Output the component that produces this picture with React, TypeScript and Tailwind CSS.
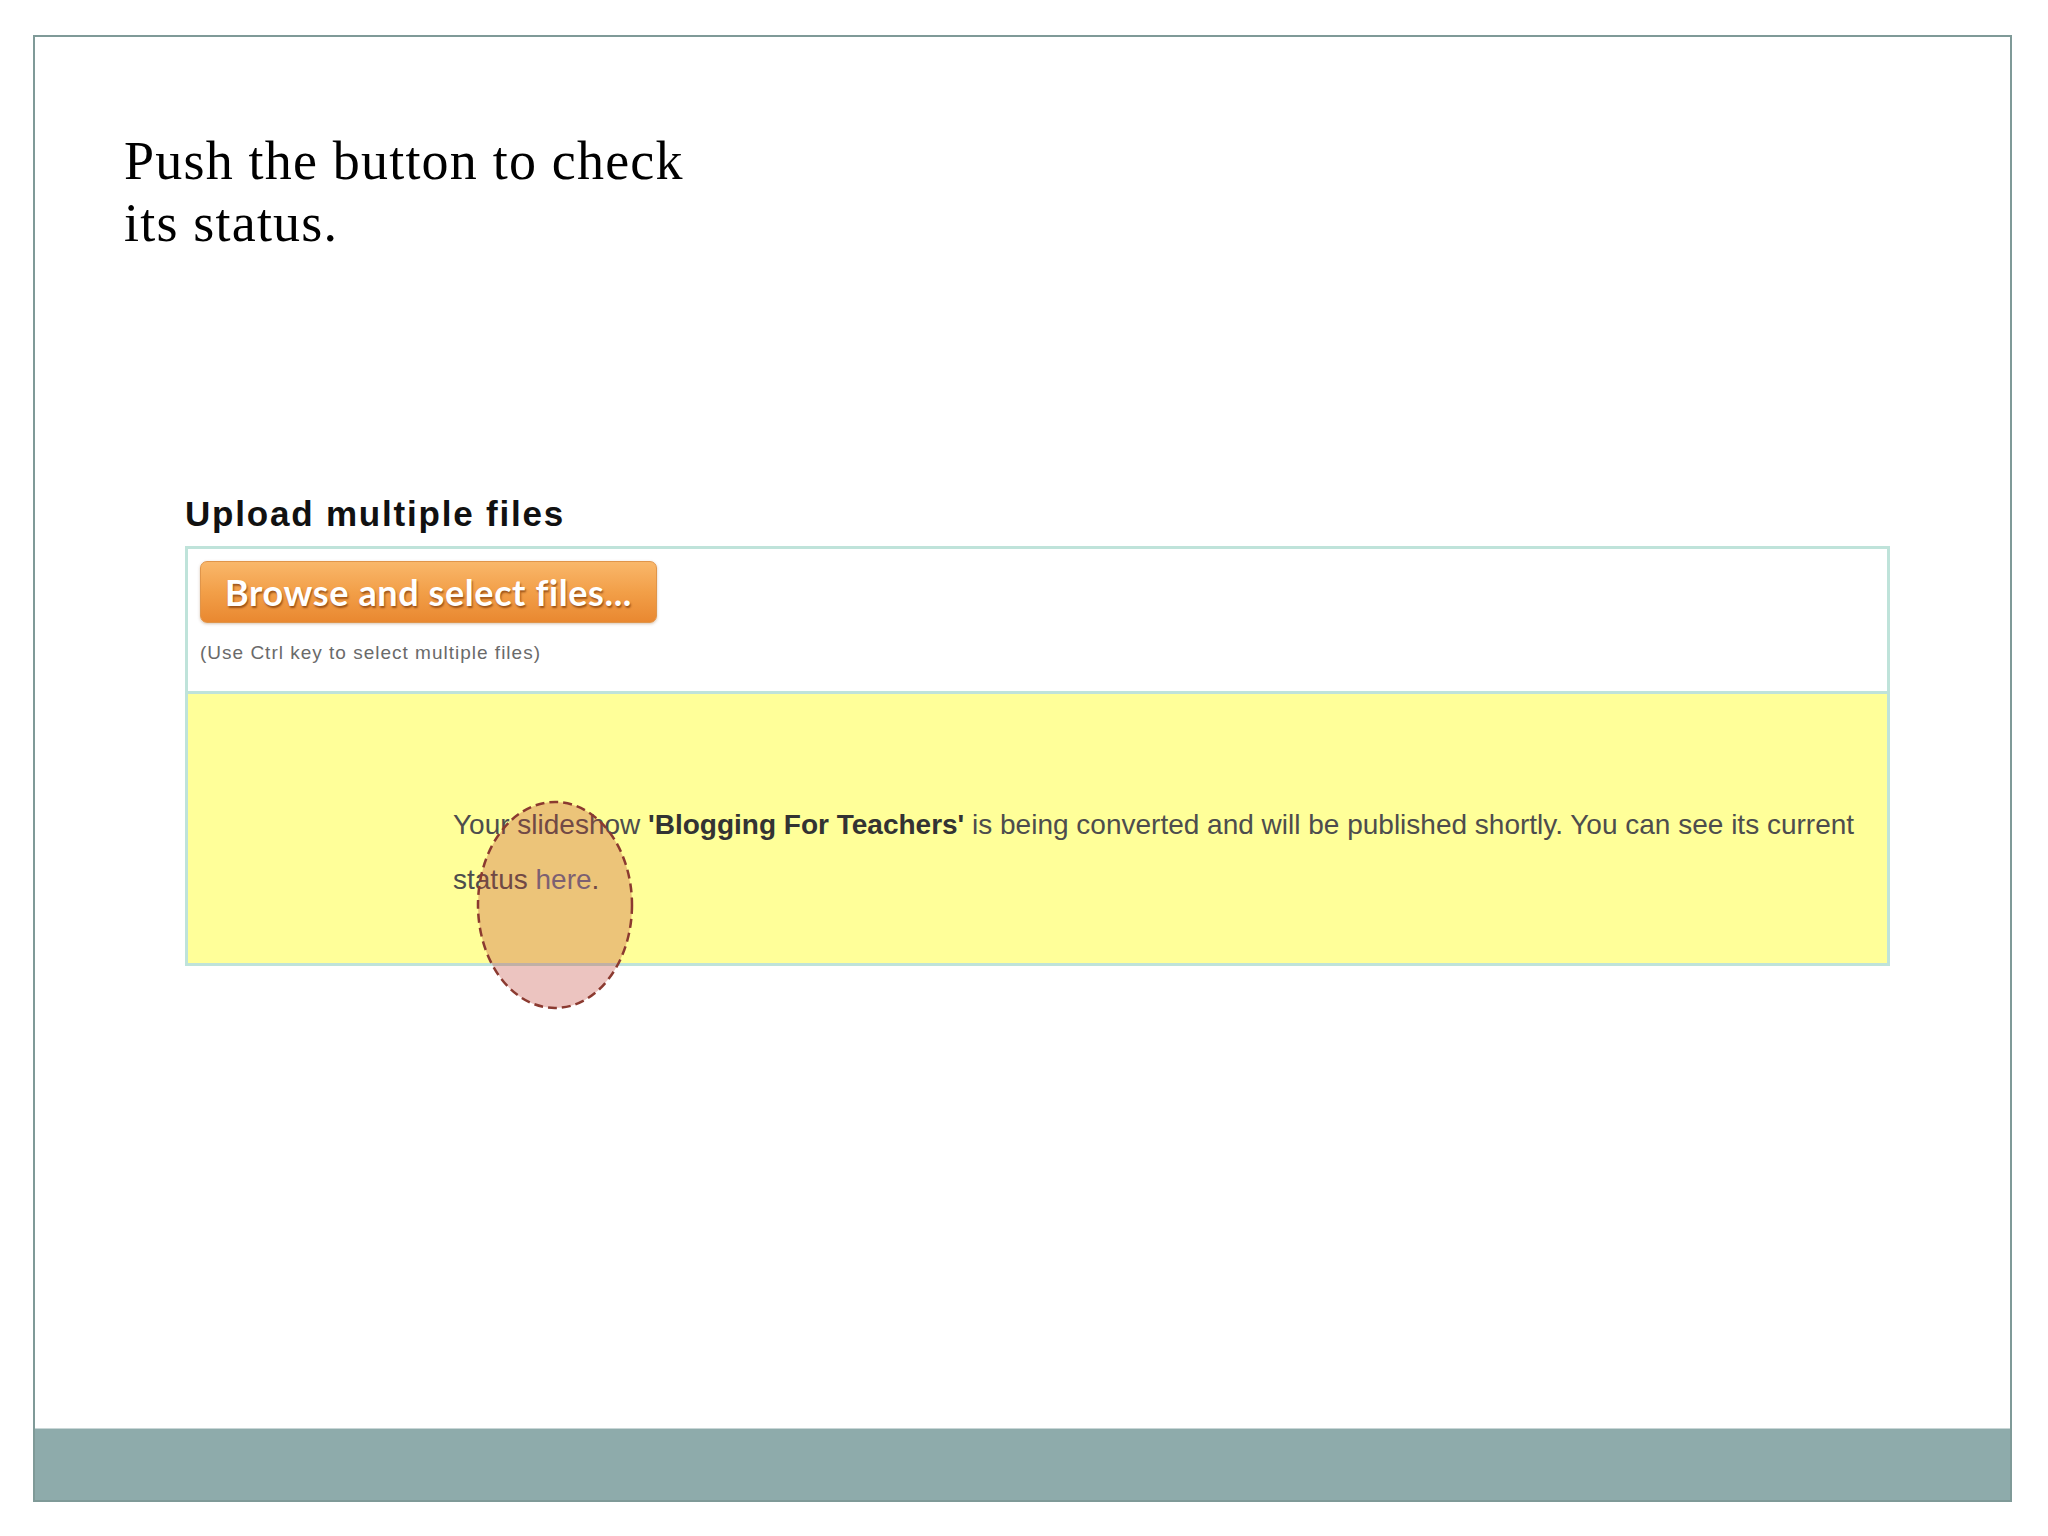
export default function App() {
  return (
    <div className="w-[2048px] h-[1536px] bg-white pl-[33px] pt-[35px]">
      <div className="w-[1979px] h-[1467px] border-2 border-[#7f9a98] flex flex-col">
        <div className="flex-1 pt-[93px]">
          <h1
            className="ml-[89px] text-[54px] leading-[62px] tracking-[1.2px] text-black"
            style={{ fontFamily: "Georgia, 'Liberation Serif', serif" }}
          >
            Push the button to check
            <br />
            its status.
          </h1>

          <div className="ml-[150px] mt-[240px] w-[1705px]" style={{ fontFamily: "'Liberation Sans', Arial, sans-serif" }}>
            <h2 className="text-[35px] leading-[40px] font-bold tracking-[1.8px] text-[#111]">Upload multiple files</h2>

            <div className="relative mt-[12px] border-[3px] border-[#bfe3da]">
              <div className="h-[142px] bg-white px-[12px] pt-[12px]">
                <button
                  className="w-[457px] h-[62px] rounded-[7px] border border-[#e0954a] bg-gradient-to-b from-[#f9b76a] via-[#f29f48] to-[#e98830] text-white text-[36px] font-bold tracking-[0.6px] shadow-[0_1px_3px_rgba(120,60,0,0.3)] [text-shadow:1px_2px_2px_rgba(110,45,0,0.65)]"
                  style={{ fontFamily: "Lato, 'Open Sans', sans-serif" }}
                >
                  Browse and select files...
                </button>
                <p className="mt-[19px] text-[19px] leading-[22px] text-[#6a6a6a] tracking-[1px]">
                  (Use Ctrl key to select multiple files)
                </p>
              </div>

              <div className="h-[272px] border-t-[3px] border-[#bfe3da] bg-[#ffff99] pl-[265px] pt-[103px]">
                <p className="text-[28px] leading-[55px] text-[#4d4d4d] whitespace-nowrap">
                  Your slideshow <b className="text-[#333]">'Blogging For Teachers'</b> is being converted and will be
                  published shortly. You can see its current
                  <br />
                  status <span className="text-[#5d6f8e]">here</span>.
                </p>
              </div>

              <svg className="absolute left-[287px] top-[250px]" width="160" height="212" viewBox="0 0 160 212">
                <ellipse
                  cx="80"
                  cy="106"
                  rx="77"
                  ry="103"
                  fill="rgba(194,65,52,0.31)"
                  stroke="#8b3a30"
                  strokeWidth="2.5"
                  strokeDasharray="9 5"
                />
              </svg>
            </div>
          </div>
        </div>
        <div className="h-[72px] bg-[#8eabab] border-t border-[#c8d6d6]" />
      </div>
    </div>
  );
}
